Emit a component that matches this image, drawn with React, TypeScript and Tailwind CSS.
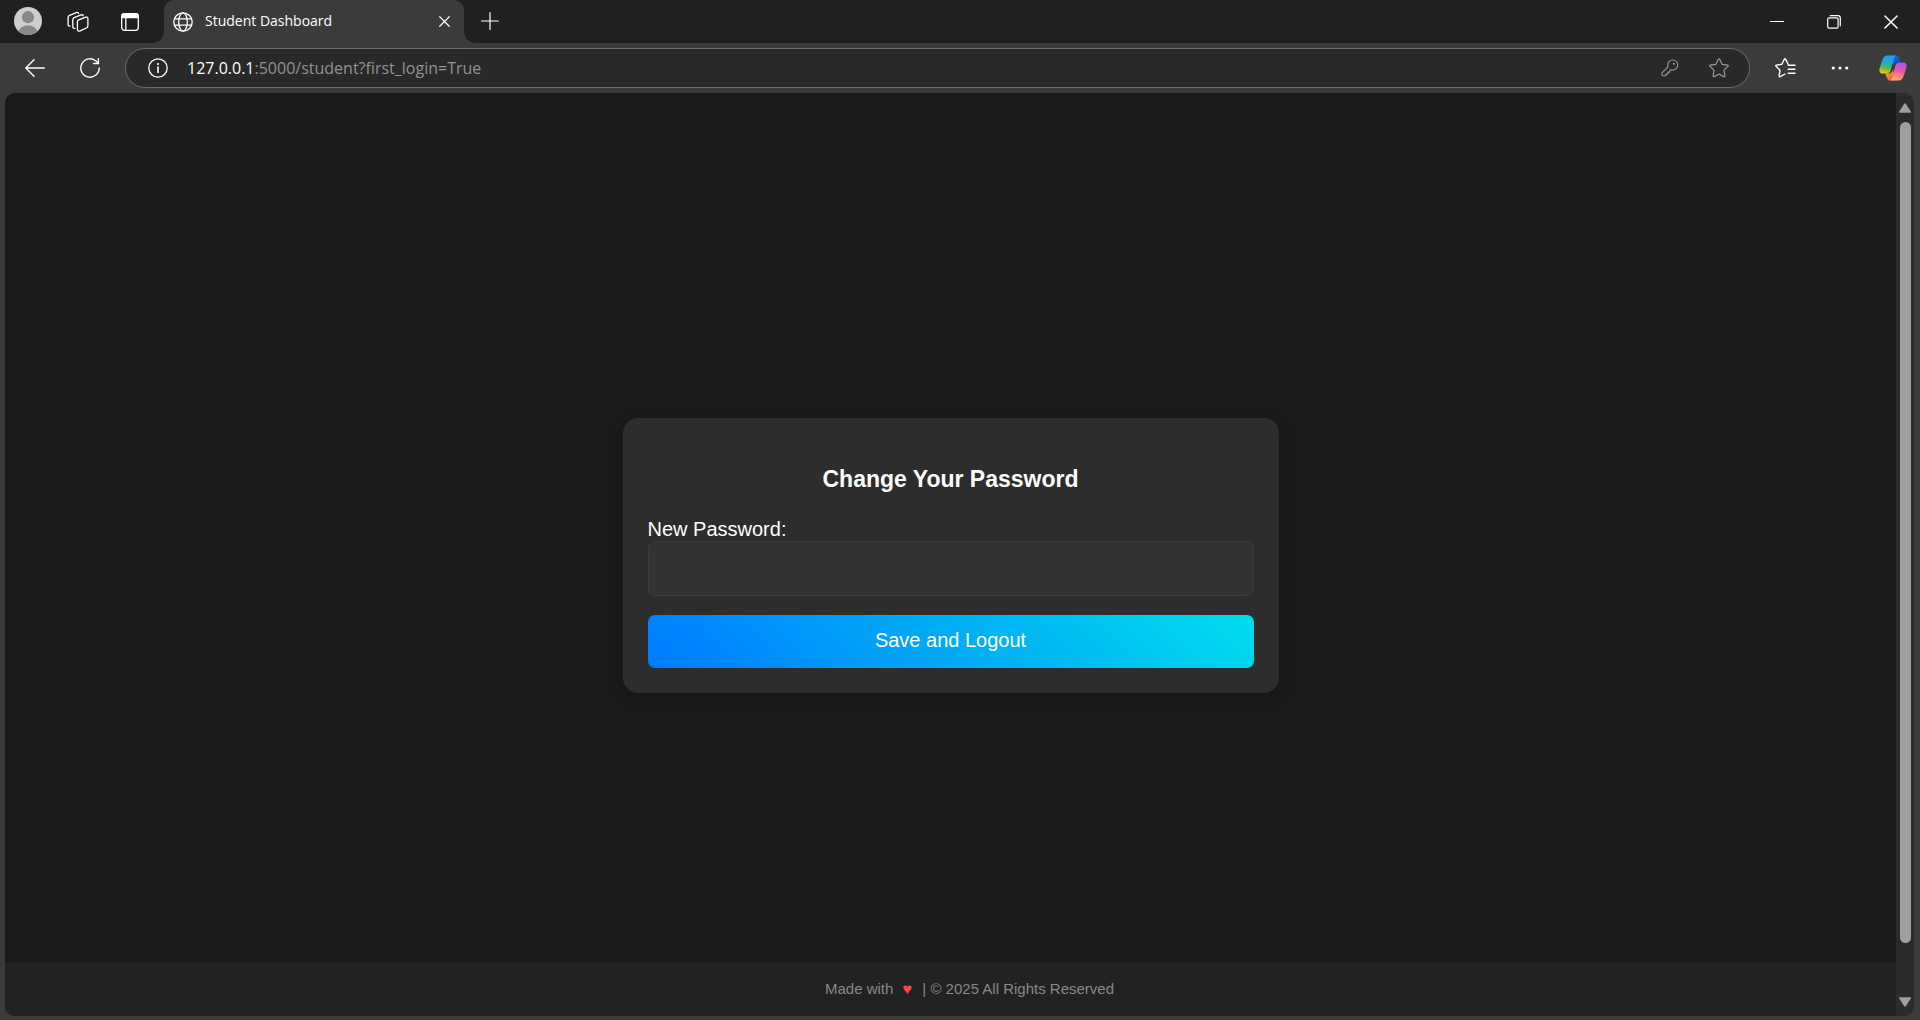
import React from 'react';

type IconProps = { className?: string };

const stroke = {
  fill: 'none',
  stroke: 'currentColor',
  strokeLinecap: 'round' as const,
  strokeLinejoin: 'round' as const,
};

const AvatarIcon = () => (
  <svg viewBox="0 0 28 28" className="size-7">
    <defs>
      <clipPath id="avatar-clip">
        <circle cx="14" cy="14" r="14" />
      </clipPath>
    </defs>
    <circle cx="14" cy="14" r="14" fill="#d0cecc" />
    <g clipPath="url(#avatar-clip)" fill="#8a8886">
      <circle cx="14" cy="10.2" r="6.1" />
      <ellipse cx="14" cy="25.5" rx="9.5" ry="7.2" />
    </g>
  </svg>
);

const WorkspacesIcon = () => (
  <svg viewBox="0 0 22 22" className="size-[22px]" {...stroke} strokeWidth="1.3">
    <path d="M11.2 9.2 L18.7 6.2 Q20.9 5.5 20.9 7.8 V14.7 Q20.9 16.3 19.4 17 L13.2 19.9 Q10.6 20.8 10.4 18.4 V10.6 Q10.4 9.6 11.2 9.2Z" />
    <path d="M7.8 17.4 Q5.8 17.7 5.8 15.6 V9 Q5.8 7.3 7.2 6.7 L14 3.9 Q15.7 3.4 16.2 4.7" />
    <path d="M3 15.1 Q1.1 15.3 1.1 13.2 V6.6 Q1.1 5 2.6 4.4 L9.3 1.6 Q11.1 1 11.6 2.4" />
  </svg>
);

const TabActionsIcon = () => (
  <svg viewBox="0 0 18 18" className="size-[18px]" {...stroke} strokeWidth="1.3">
    <rect x="0.7" y="0.7" width="16.6" height="16.6" rx="2.8" />
    <path d="M0.7 4.6 V3.4 Q0.7 0.7 3.4 0.7 H14.6 Q17.3 0.7 17.3 3.4 V4.6Z" fill="currentColor" />
    <path d="M4.8 5 V17" />
  </svg>
);

const GlobeIcon = () => (
  <svg viewBox="0 0 20 20" className="size-5 shrink-0" {...stroke} strokeWidth="1.3">
    <circle cx="10" cy="10" r="9.2" />
    <ellipse cx="10" cy="10" rx="4.3" ry="9.2" />
    <path d="M1.5 6.8 H18.5 M1.5 13.2 H18.5" />
  </svg>
);

const CloseIcon = ({ className }: IconProps) => (
  <svg viewBox="0 0 12 12" className={className} {...stroke} strokeWidth="1.3">
    <path d="M0.8 0.8 L11.2 11.2 M11.2 0.8 L0.8 11.2" />
  </svg>
);

const PlusIcon = () => (
  <svg viewBox="0 0 18 18" className="size-[18px]" {...stroke} strokeWidth="1.2">
    <path d="M9 0.6 V17.4 M0.6 9 H17.4" />
  </svg>
);

const BackIcon = () => (
  <svg viewBox="0 0 20 18" className="h-[18px] w-5" {...stroke} strokeWidth="1.4">
    <path d="M19.3 9 H0.8 M9 0.8 L0.8 9 L9 17.2" />
  </svg>
);

const ReloadIcon = () => (
  <svg viewBox="0 0 20 20" className="size-5" {...stroke} strokeWidth="1.4">
    <path d="M19.2 10 A9.2 9.2 0 1 1 16.6 3.6 L18.4 5.5" />
    <path d="M18.4 0.8 V5.5 H13.5" />
  </svg>
);

const InfoIcon = () => (
  <svg viewBox="0 0 20 20" className="size-5" {...stroke} strokeWidth="1.3">
    <circle cx="10" cy="10" r="9.2" />
    <path d="M10 9 V14.4" strokeWidth="1.6" />
    <circle cx="10" cy="6" r="1.1" fill="currentColor" stroke="none" />
  </svg>
);

const KeyIcon = () => (
  <svg viewBox="0 0 18 18" className="size-[18px]" {...stroke} strokeWidth="1.1">
    <path d="M11.7 1 C14.6 1 16.7 3.2 16.7 6 C16.7 9 14.5 11 11.6 11 C10.9 11 10.2 10.9 9.7 10.7 L8.8 11.6 V12.4 Q8.8 13.1 8.1 13.1 H6.9 V14.4 Q6.9 15.1 6.2 15.1 H4.9 V16 Q4.9 16.8 4.1 16.8 H2 Q1 16.8 1 15.8 V14.5 Q1 13.9 1.5 13.4 L7 7.8 C6.8 7.3 6.7 6.7 6.7 6 C6.7 3.2 8.9 1 11.7 1Z" />
    <circle cx="12.9" cy="4.7" r="1" fill="currentColor" stroke="none" />
  </svg>
);

const StarIcon = () => (
  <svg viewBox="0 0 20 20" className="size-5" {...stroke} strokeWidth="1.2">
    <path d="M9.3 1.3 Q10 0.3 10.7 1.3 L13.1 6.3 L18.5 7.1 Q19.7 7.4 18.9 8.3 L15 12.2 L15.9 17.8 Q15.9 19.1 14.8 18.6 L10 16 L5.2 18.6 Q4.1 19.1 4.1 17.8 L5 12.2 L1.1 8.3 Q0.3 7.4 1.5 7.1 L6.9 6.3Z" />
  </svg>
);

const FavoritesIcon = () => (
  <svg viewBox="0 0 21 20" className="h-5 w-[21px]" {...stroke} strokeWidth="1.4">
    <path d="M13.5 7.2 L13.1 6.3 L10.7 1.3 Q10 0.3 9.3 1.3 L6.9 6.3 L1.5 7.1 Q0.3 7.4 1.1 8.3 L5 12.2 L4.1 17.8 Q4.1 19.1 5.2 18.6 L10 16" />
    <path d="M13.5 7.2 H20 M13.2 11.2 H20 M13.2 15.2 H20" />
  </svg>
);

const MoreIcon = () => (
  <svg viewBox="0 0 18 4" className="h-1 w-[18px]" fill="currentColor">
    <circle cx="2.3" cy="2" r="1.6" />
    <circle cx="9" cy="2" r="1.6" />
    <circle cx="15.7" cy="2" r="1.6" />
  </svg>
);

const CopilotIcon = () => (
  <svg viewBox="0 0 28 26" className="h-[26px] w-7">
    <defs>
      <linearGradient id="cp-left" x1="0.4" y1="0" x2="0.25" y2="1">
        <stop offset="0" stopColor="#1aa0ea" />
        <stop offset="0.4" stopColor="#2aa8c4" />
        <stop offset="0.68" stopColor="#58b84a" />
        <stop offset="1" stopColor="#f5cf12" />
      </linearGradient>
      <linearGradient id="cp-top" x1="0" y1="0" x2="1" y2="1">
        <stop offset="0" stopColor="#0b7fe0" />
        <stop offset="1" stopColor="#1438c0" />
      </linearGradient>
      <linearGradient id="cp-right" x1="0.7" y1="0" x2="0.4" y2="1">
        <stop offset="0" stopColor="#9d5cf0" />
        <stop offset="0.45" stopColor="#ea58a8" />
        <stop offset="1" stopColor="#ffa95c" />
      </linearGradient>
      <linearGradient id="cp-bottom" x1="0" y1="0" x2="1" y2="1">
        <stop offset="0" stopColor="#ffb340" />
        <stop offset="1" stopColor="#ed3d40" />
      </linearGradient>
    </defs>
    <path d="M11 0.4 H17 C19.2 0.4 20 1.8 20.6 3.8 L21.8 7.6 H18.5 C16 7.6 14.9 9 14.2 11 L12 4Z" fill="url(#cp-top)" />
    <path d="M17 25.6 H11.3 C9.2 25.6 8.3 24.2 7.7 22.2 L6.4 18.6 H9.5 C12 18.6 13 17.1 13.7 15 L16 21Z" fill="url(#cp-bottom)" />
    <path d="M15.8 0.4 H8.4 C5.8 0.4 4.2 2.3 3.2 5.2 L0.8 12.8 C-0.4 16.8 1.1 18.6 4 18.6 H7.6 C10 18.6 11.1 17.2 11.8 15 L14.8 4.3 C15.4 2 15.9 0.9 17 0.5Z" fill="url(#cp-left)" />
    <path d="M12.2 25.6 H19.6 C22.2 25.6 23.8 23.7 24.8 20.8 L27.2 13.4 C28.4 9.4 26.9 7.6 24 7.6 H20.4 C18 7.6 16.9 9 16.2 11.2 L13.2 21.8 C12.6 24.1 12.1 25.1 11 25.5Z" fill="url(#cp-right)" />
  </svg>
);

const TitleBar = () => (
  <header className="flex h-[43px] shrink-0 items-stretch bg-[#202020] text-white">
    <div className="flex w-[164px] shrink-0 items-center pl-3.5">
      <button aria-label="Profile" className="mb-px"><AvatarIcon /></button>
      <button aria-label="Workspaces" className="ml-[25px]"><WorkspacesIcon /></button>
      <button aria-label="Tab actions" className="ml-8"><TabActionsIcon /></button>
    </div>
    <div className="relative flex w-[300px] items-center rounded-t-[10px] bg-[#3b3b3b] pl-[9px] pr-3.5">
      <span className="absolute -left-2.5 bottom-0 size-2.5 bg-[radial-gradient(circle_at_0_0,#202020_9px,#3b3b3b_10px)]" />
      <span className="absolute -right-2.5 bottom-0 size-2.5 bg-[radial-gradient(circle_at_100%_0,#202020_9px,#3b3b3b_10px)]" />
      <GlobeIcon />
      <span className="ml-3 flex-1 whitespace-nowrap pb-0.5 text-[14px] leading-5">Student Dashboard</span>
      <button aria-label="Close tab"><CloseIcon className="size-[11px]" /></button>
    </div>
    <button aria-label="New tab" className="ml-[17px] flex items-center pb-px"><PlusIcon /></button>
    <div className="ml-auto flex items-center gap-[43px] pr-[22px]">
      <button aria-label="Minimize" className="flex h-4 w-[14px] items-center">
        <span className="h-px w-full bg-white" />
      </button>
      <button aria-label="Restore">
        <svg viewBox="0 0 14 14" className="size-3.5" {...stroke} strokeWidth="1.2">
          <rect x="0.7" y="2.8" width="10.4" height="10.4" rx="1.4" />
          <path d="M3.2 0.7 H11 Q13.3 0.7 13.3 3 V10.8" />
        </svg>
      </button>
      <button aria-label="Close window"><CloseIcon className="size-3.5" /></button>
    </div>
  </header>
);

const Toolbar = () => (
  <nav aria-label="Browser toolbar" className="flex h-[50px] shrink-0 items-center bg-[#3b3b3b] pb-px text-white">
    <button aria-label="Back" className="ml-[25px]"><BackIcon /></button>
    <button aria-label="Reload" className="ml-[35px]"><ReloadIcon /></button>
    <div className="ml-[25px] flex h-10 flex-1 items-center rounded-full border border-[#6b6b6b] bg-[#292929] pl-[22px] pr-5">
      <button aria-label="Site information"><InfoIcon /></button>
      <a href="#address" className="ml-[19px] whitespace-nowrap text-[16px] leading-6 text-[#929292]">
        <span className="text-white">127.0.0.1</span>:5000/student?first_login=True
      </a>
      <div className="ml-auto flex items-center gap-[30px] text-[#9a9a9a]">
        <button aria-label="Saved passwords"><KeyIcon /></button>
        <button aria-label="Add to favorites"><StarIcon /></button>
      </div>
    </div>
    <button aria-label="Favorites" className="ml-[25px]"><FavoritesIcon /></button>
    <button aria-label="More" className="ml-[35px]"><MoreIcon /></button>
    <button aria-label="Copilot" className="ml-[30px] mr-[13px]"><CopilotIcon /></button>
  </nav>
);

const Scrollbar = () => (
  <div className="flex w-[18px] shrink-0 flex-col items-center bg-[#2b2b2b] pb-[9px] pt-[10px] text-[#9f9f9f]">
    <button aria-label="Scroll up">
      <svg viewBox="0 0 12 10" className="h-2.5 w-3" fill="currentColor" stroke="currentColor" strokeWidth="1.5" strokeLinejoin="round">
        <path d="M6 1 L11.2 9 H0.8Z" />
      </svg>
    </button>
    <div className="mb-[54px] mt-[9px] w-[11px] flex-1 rounded-full bg-[#9f9f9f]" />
    <button aria-label="Scroll down">
      <svg viewBox="0 0 12 10" className="h-2.5 w-3" fill="currentColor" stroke="currentColor" strokeWidth="1.5" strokeLinejoin="round">
        <path d="M6 9 L11.2 1 H0.8Z" />
      </svg>
    </button>
  </div>
);

const PasswordCard = () => (
  <form
    onSubmit={(event) => event.preventDefault()}
    className="flex w-full max-w-[656px] flex-col rounded-[15px] bg-[#2d2d2d] px-[25px] pb-[25px] pt-[45px] shadow-[0_5px_19px_rgba(0,0,0,0.2)]"
  >
    <h1 className="text-center text-[23px] font-bold leading-8 text-white">Change Your Password</h1>
    <label htmlFor="new-password" className="mt-[22px] text-[20px] leading-6 text-white">
      New Password:
    </label>
    <input
      id="new-password"
      type="password"
      className="h-[55px] w-full rounded-[7px] border border-[#3c3c3c] bg-[#333333] px-4 text-[20px] text-white outline-none"
    />
    <button
      type="submit"
      className="mt-[19px] h-[53px] w-full rounded-[7px] bg-[linear-gradient(45deg,#007bff,#00ddeb)] pb-0.5 text-[20px] leading-6 text-white"
    >
      Save and Logout
    </button>
  </form>
);

export default function App() {
  return (
    <div className="flex min-h-screen flex-col bg-[#3b3b3b] font-['Open_Sans','Noto_Sans',sans-serif]">
      <TitleBar />
      <Toolbar />
      <div className="mb-1 ml-[5px] mr-[6px] flex flex-1 overflow-hidden rounded-[10px] font-['Liberation_Sans',Arial,sans-serif]">
        <div className="flex flex-1 flex-col bg-[#1a1a1a]">
          <main className="flex flex-1 items-center justify-center pt-[55px]">
            <PasswordCard />
          </main>
          <footer className="flex h-[54px] items-center justify-center bg-[#222222] pl-[38px] text-[15px] text-[#888888]">
            <span>Made with</span>
            <svg viewBox="0 0 10 10" className="mx-[10px] size-[9px]" fill="#ff4444" role="img" aria-label="love">
              <path d="M5 10 C3.5 7.2 0.3 5.2 0.3 2.6 C0.3 0.2 3.8 -0.4 5 2 C6.2 -0.4 9.7 0.2 9.7 2.6 C9.7 5.2 6.5 7.2 5 10Z" />
            </svg>
            <span>| © 2025 All Rights Reserved</span>
          </footer>
        </div>
        <Scrollbar />
      </div>
    </div>
  );
}
